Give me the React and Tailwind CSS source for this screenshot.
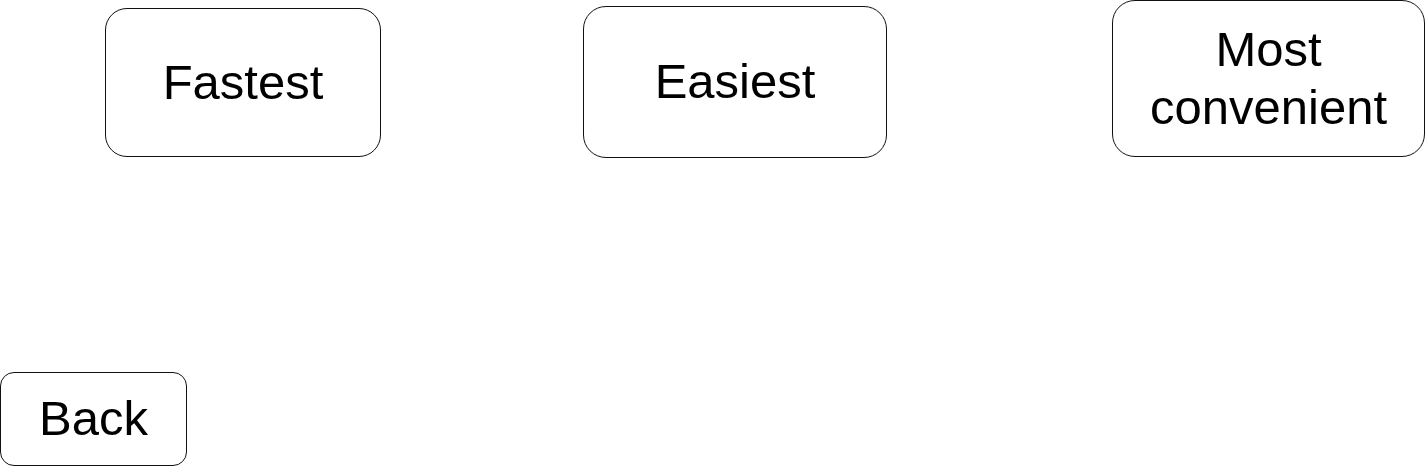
import React from 'react';

const options = [
  { label: 'Fastest', box: 'ml-[105px] mt-[8px] w-[276px] h-[149px] rounded-[22px]' },
  { label: 'Easiest', box: 'ml-[202px] mt-[6px] w-[304px] h-[152px] rounded-[23px]' },
  { label: 'Most convenient', box: 'ml-[225px] mt-0 w-[313px] h-[157px] rounded-[23px] leading-[58px] pb-[2px]' },
];

const App = () => {
  return (
    <div className="w-[1425px] h-[466px] bg-white flex flex-col justify-between text-black font-['Liberation_Sans',Arial,sans-serif] overflow-hidden">
      <div className="flex items-start">
        {options.map((opt) => (
          <button
            key={opt.label}
            className={`${opt.box} shrink-0 border border-[#111] bg-white flex items-center justify-center text-center text-[49px] px-6`}
          >
            {opt.label}
          </button>
        ))}
      </div>

      <div className="flex">
        <button className="w-[187px] h-[94px] rounded-[14px] border border-[#111] bg-white flex items-center justify-center text-[49px]">
          Back
        </button>
      </div>
    </div>
  );
};

export default App;
